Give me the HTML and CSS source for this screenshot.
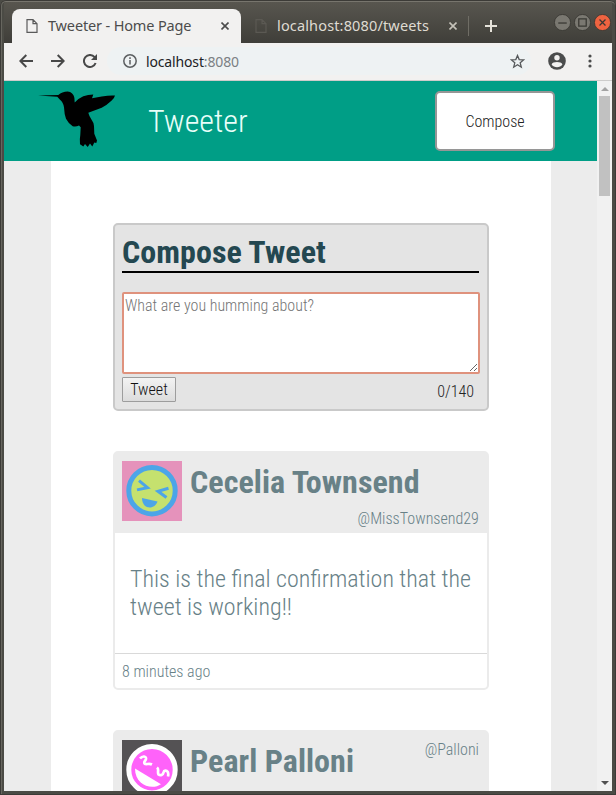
FILE: index.html
```html
<!DOCTYPE html>
<html lang="en">
<head>
<meta charset="utf-8">
<title>Tweeter - Home Page</title>
<link rel="stylesheet" href="styles.css">
</head>
<body>
<div class="window">
  <div class="tabs">
    <div class="tab active">
      <svg class="file" width="12" height="14" viewBox="0 0 12 14"><path d="M1 .7h6l4 4v8.6H1zM7 .7v4h4"/></svg>
      <span class="tab-title">Tweeter - Home Page</span>
      <svg class="close" width="8" height="8" viewBox="0 0 8 8"><path d="M.5.5l7 7m0-7l-7 7"/></svg>
    </div>
    <div class="tab other">
      <svg class="file" width="12" height="14" viewBox="0 0 12 14"><path d="M1 .7h6l4 4v8.6H1zM7 .7v4h4"/></svg>
      <span class="tab-title second">localhost:8080/tweets</span>
      <svg class="close" width="8" height="8" viewBox="0 0 8 8"><path d="M.5.5l7 7m0-7l-7 7"/></svg>
    </div>
    <svg class="plus" width="12" height="12" viewBox="0 0 12 12"><path d="M6 0v12M0 6h12"/></svg>
    <div class="controls">
      <svg width="17" height="17" viewBox="0 0 16 16"><circle cx="8" cy="8" r="7.6"/><path d="M4 8.500h8"/></svg>
      <svg width="17" height="17" viewBox="0 0 16 16"><circle cx="8" cy="8" r="7.6"/><path d="M4.500 4.500h7v7h-7z"/></svg>
      <svg class="quit" width="17" height="17" viewBox="0 0 16 16"><circle cx="8" cy="8" r="7.6"/><path d="M5.200 5.200l5.600 5.600m0-5.600l-5.600 5.600"/></svg>
    </div>
  </div>
  <div class="toolbar">
    <svg class="nav" width="14" height="14" viewBox="0 0 14 14"><path d="M14 7H1.500M7.300 1L1.300 7l6 6"/></svg>
    <svg class="nav" width="14" height="14" viewBox="0 0 14 14"><path d="M0 7h12.500M6.700 1l6 6-6 6"/></svg>
    <svg class="nav" width="14" height="14" viewBox="0 0 14 14"><path d="M12.600 9A6 6 0 1 1 11.600 3.200"/><path class="solid" d="M14 0v6H8z"/></svg>
    <div class="address">
      <svg class="info" width="14" height="14" viewBox="0 0 14 14"><circle cx="7" cy="7" r="6.200"/><path d="M7 6v4.500M7 3.300v1.600"/></svg>
      <span class="url">localhost<span class="port">:8080</span></span>
      <svg class="star" width="15" height="15" viewBox="0 0 15 15"><path d="M7.500 1.500l1.700 4.100 4.400.3-3.400 2.900 1.100 4.400-3.800-2.400-3.800 2.400 1.100-4.400L1.400 5.900l4.400-.3z"/></svg>
    </div>
    <svg class="user" width="18" height="18" viewBox="0 0 18 18"><circle cx="9" cy="9" r="8.800" fill="#4b4c4c"/><circle cx="9" cy="5.800" r="2.700" fill="#f2f1f0"/><path d="M3.600 12.500C4.500 9.300 13.500 9.300 14.400 12.500 12 16.200 6 16.200 3.600 12.500z" fill="#f2f1f0"/></svg>
    <svg class="dots" width="4" height="14" viewBox="0 0 4 14"><circle cx="2" cy="2" r="1.600"/><circle cx="2" cy="7" r="1.600"/><circle cx="2" cy="12" r="1.600"/></svg>
  </div>
  <div class="viewport">
    <div class="page">
      <header class="banner">
        <svg class="bird" width="78" height="57" viewBox="0 0 78 57"><path d="M0 4.500L20.300 4Q24 .5 29.700.5C33 .7 36 3.500 36.400 7L36.700 11.500Q40 7.500 45.300 5.200 50 3.500 55.300 3.500L54 7.200 63.700 5.500Q72 4 77 4.500 76.500 7 73.700 9.500 69 14 63.700 16.800L50.300 21.800Q51 25 54 29.500 56 32 56 35L56.300 42.800 59 49.500 58.300 52 56.300 51.500 54.300 55.500 52 52.500 49.700 56 47 53 45.300 55.500 42 53.200Q41.500 48 42.300 44L42.700 36.200 41 34.500Q38 36 34.700 35.200 30 32 28 27.800 26.300 23 26 16.200 25 11 22 8.800L19.300 5.800z"/></svg>
        <div class="brand">Tweeter</div>
        <button class="compose-toggle">Compose</button>
      </header>
      <main class="container">
        <section class="composer">
          <h2>Compose Tweet</h2>
          <form>
            <textarea placeholder="What are you humming about?"></textarea>
            <div class="actions"><button type="button" class="submit">Tweet</button><span class="counter">0/140</span></div>
          </form>
        </section>
        <article class="tweet">
          <div class="tweet-head">
            <svg class="avatar" width="60" height="60" viewBox="0 0 60 60"><path fill="#e592bb" d="M0 0h60v60H0z"/><circle cx="30" cy="29.700" r="23.200" fill="#c5e16e" stroke="#4ca5e8" stroke-width="5"/><g fill="none" stroke="#4ca5e8" stroke-width="3"><path d="M17 19.700l8.500 7-10.500 2.200M46.500 27.300l-10.500 3 8.500 6.200"/></g><path fill="#4ca5e8" d="M20 37l15.500 3.500c-2.500 8.500-15.500 8.500-15.500-3.500z"/></svg>
            <h2>Cecelia Townsend</h2>
            <span class="handle low">@MissTownsend29</span>
          </div>
          <p class="message">This is the final confirmation that the<br>tweet is working!!</p>
          <footer>8 minutes ago</footer>
        </article>
        <article class="tweet">
          <div class="tweet-head">
            <svg class="avatar" width="60" height="60" viewBox="0 0 60 60"><path fill="#545254" d="M0 0h60v60H0z"/><circle cx="30" cy="29.700" r="23.200" fill="#ff62fa" stroke="#fff" stroke-width="5"/><g fill="none" stroke="#fff" stroke-width="2.700"><path d="M18 18.500c2.500-3 6.500-2.500 6 .5-.4 2-2.500 2.500-1.500 4.500 1.500 1.500 4.500-.5 7.500 1M35 27.500c2.500 2 0 4.500 1.500 7 2 1.500 4.500.5 5-2 .5-2.500 3-2.500 4.300-.5.600 1.500.6 3 .2 4.500"/></g><path fill="#fff" d="M13 28.500l26 15.800c-9 6.200-26 1.200-26-15.800z"/></svg>
            <h2>Pearl Palloni</h2>
            <span class="handle">@Palloni</span>
          </div>
        </article>
      </main>
    </div>
    <div class="scrollbar"><i class="up"></i><i class="thumb"></i><i class="down"></i></div>
  </div>
</div>
</body>
</html>
```
FILE: styles.css
```css
* { box-sizing: border-box; }
body {
  margin: 0;
  width: 616px;
  height: 795px;
  overflow: hidden;
  background: #4b4b45;
  font-family: "Roboto Condensed", Roboto, sans-serif;
  font-stretch: 75%;
  font-weight: 300;
}
svg { display: block; flex: none; }
h2, p { margin: 0; }

.window {
  height: 795px;
  padding: 0 4px 4px;
  border-radius: 6px 6px 0 0;
  display: flex;
  flex-direction: column;
  box-shadow: inset 0 1px #3c3b37, inset 1px 0 #3c3b37, inset -1px -1px #3c3b37, inset 0 2px #77756d, inset 2px 0 #67665f;
}

.tabs {
  height: 41px;
  flex: none;
  display: flex;
  align-items: center;
  margin-top: 2px;
  padding: 7px 0 0 8px;
  background: linear-gradient(#58564f, #3f3e39);
}
.tab { height: 34px; display: flex; align-items: center; }
.tab.active {
  width: 229px;
  padding: 0 12px 0 14px;
  background: #f2f1f0;
  border-radius: 8px 8px 0 0;
}
.tab.other { width: 228px; padding: 0 11px 0 14px; border-right: 1px solid #6f6d65; height: 20px; }
.file { fill: none; stroke: #5a5a5a; stroke-width: 1.200; }
.other .file { stroke: #5b5953; }
.tab-title {
  margin: -2px 0 0 10px;
  font: 400 14.500px "Noto Sans", sans-serif;
  letter-spacing: -.15px;
  color: #4c4c4c;
  white-space: nowrap;
}
.other .tab-title { color: #dfdbd2; letter-spacing: .15px; }
.close { margin-left: auto; stroke: #4c4c4c; stroke-width: 1.600; }
.other .close { stroke: #c5c2b9; }
.plus { margin-left: 16px; stroke: #e5e2da; stroke-width: 2; }
.controls { display: flex; gap: 3px; margin: -7px 1px 0 auto; }
.controls circle { fill: #7a7871; stroke: #393833; stroke-width: .8; }
.controls path { fill: none; stroke: #393833; stroke-width: 1.200; }
.controls .quit circle { fill: #ef6340; }

.toolbar {
  height: 38px;
  flex: none;
  display: flex;
  align-items: center;
  padding: 0 20px 2px 15px;
  background: #f2f1f0;
  border-bottom: 1px solid #cdcccb;
}
.nav { margin-right: 18px; fill: none; stroke: #484848; stroke-width: 2; }
.nav .solid { fill: #484848; stroke: none; }
.address {
  width: 424px;
  height: 28px;
  margin: 1px 0 0 3px;
  margin-left: -8px;
  padding: 0 6px 0 16px;
  border-radius: 14px;
  background: #eef2f3;
  display: flex;
  align-items: center;
}
.info { fill: none; stroke: #5c5f61; stroke-width: 1.500; }
.url { margin-left: 9px; font: 400 14px "Noto Sans", sans-serif; color: #202124; letter-spacing: -.15px; }
.port { color: #7b8083; }
.star { margin-left: auto; fill: none; stroke: #55585a; stroke-width: 1.300; }
.user { margin-left: 17px; }
.dots { margin-left: auto; fill: #4b4c4c; }

.viewport { height: 710px; display: flex; overflow: hidden; }
.page { width: 593px; background: #ececec; }
.banner {
  height: 80px;
  background: #009e86;
  display: flex;
  align-items: center;
  padding: 0 42px 0 34px;
}
.bird { margin-top: -4px; }
.brand { margin-left: 32px; color: #e8fff9; font-size: 32px; line-height: 38px; }
.compose-toggle {
  width: 120px;
  height: 60px;
  margin-left: auto;
  border: 2px solid #969696;
  border-radius: 5px;
  background: #fff;
  font: inherit;
  font-size: 16px;
  color: #222;
}
.container { width: 500px; height: 700px; margin-left: 47px; padding: 62px 62px 0; background: #fff; }
.composer {
  height: 188px;
  padding: 7px 8px 0 7px;
  border: 2px solid #c9c9c9;
  border-radius: 5px;
  background: #e4e4e4;
}
h2 { font-size: 32px; line-height: 38px; font-weight: 700; letter-spacing: .05px; }
.composer h2 { height: 41px; padding-top: 1px; border-bottom: 2px solid #000; color: #244851; }
.composer textarea {
  display: block;
  width: 358px;
  height: 82px;
  margin-top: 19px;
  padding: 2px 1px;
  border: 2px solid #df927d;
  border-radius: 2px;
  outline: 0;
  background: #fff;
  font: inherit;
  font-size: 16px;
  resize: both;
}
textarea::placeholder { color: #757575; }
.actions { display: flex; align-items: flex-start; justify-content: space-between; padding: 3px 5px 0 0; }
.submit {
  width: 54px;
  height: 25px;
  padding: 0;
  border: 1px solid #9d9d9d;
  border-radius: 1px;
  background: linear-gradient(#f3f3f3, #dcdcdc);
  font: inherit;
  font-size: 16px;
  color: #111;
}
.counter { font-size: 16px; line-height: 19px; margin-top: 5px; color: #222; }

.tweet {
  height: 239px;
  margin-top: 40px;
  border: 2px solid #ebebeb;
  border-radius: 5px;
  color: #688187;
}
.tweet-head { height: 80px; display: flex; padding: 8px 8px 0 7px; background: #ebebeb; }
.tweet-head h2 { margin: 2px 0 0 8px; white-space: nowrap; }
.handle { margin-left: auto; font-size: 16px; line-height: 19px; }
.handle.low { margin-top: 48px; margin-left: -62px; }
.message { height: 120px; padding: 32px 15px 0; font-size: 24px; line-height: 28px; white-space: nowrap; }
.tweet footer { border-top: 1px solid #d9d9d9; padding: 8px 7px 0; font-size: 16px; line-height: 19px; }

.scrollbar { width: 15px; background: #f1f1f1; display: flex; flex-direction: column; align-items: center; }
.scrollbar i { display: block; }
.up { margin-top: 6px; border: solid transparent; border-width: 0 4px 4px; border-bottom-color: #a3a3a3; }
.thumb { width: 11px; height: 100px; margin-top: 5px; background: #c1c1c1; }
.down { margin: auto 0 6px; border: solid transparent; border-width: 4px 4px 0; border-top-color: #505050; }
```
